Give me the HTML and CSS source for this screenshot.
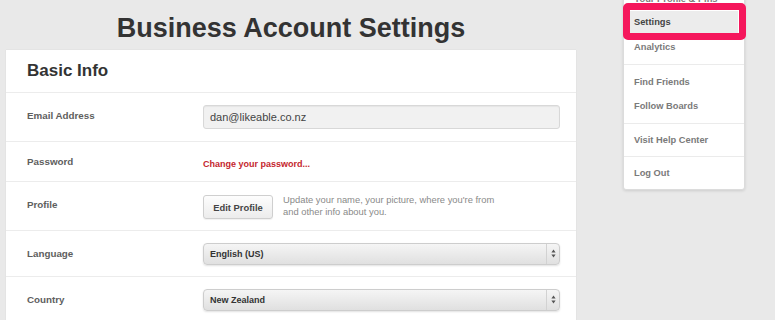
FILE: index.html
```html
<!DOCTYPE html>
<html lang="en">
<head>
    <meta charset="UTF-8">
    <title>Business Account Settings</title>
    <link rel="stylesheet" href="styles.css">
</head>
<body>
<div class="page">
    <!----------------------
    Main settings column
    ------------------------>
    <div class="main">
        <h1 class="page-title">Business Account Settings</h1>
        <div class="card">
            <div class="card-header">Basic Info</div>

            <div class="row row-tall">
                <div class="label">Email Address</div>
                <div class="field">
                    <div class="text-input">dan@likeable.co.nz</div>
                </div>
            </div>

            <div class="row row-short">
                <div class="label">Password</div>
                <div class="field">
                    <a class="link" href="#">Change your password...</a>
                </div>
            </div>

            <div class="row row-tall">
                <div class="label">Profile</div>
                <div class="field field-profile">
                    <button class="btn">Edit Profile</button>
                    <p class="help">Update your name, your picture, where you're from<br>and other info about you.</p>
                </div>
            </div>

            <div class="row row-mid">
                <div class="label">Language</div>
                <div class="field">
                    <div class="select">
                        <span class="select-value">English (US)</span>
                        <span class="select-arrows">
                            <svg width="5" height="9" viewBox="0 0 5 9"><path d="M2.5 0.5 L4.6 3.4 H0.4 Z M2.5 8.5 L4.6 5.6 H0.4 Z" fill="#555"/></svg>
                        </span>
                    </div>
                </div>
            </div>

            <div class="row row-mid">
                <div class="label">Country</div>
                <div class="field">
                    <div class="select">
                        <span class="select-value">New Zealand</span>
                        <span class="select-arrows">
                            <svg width="5" height="9" viewBox="0 0 5 9"><path d="M2.5 0.5 L4.6 3.4 H0.4 Z M2.5 8.5 L4.6 5.6 H0.4 Z" fill="#555"/></svg>
                        </span>
                    </div>
                </div>
            </div>
        </div>
    </div>

    <!----------------------
    Account dropdown menu
    ------------------------>
    <div class="sidebar">
        <div class="menu">
            <div class="menu-group menu-group-first">
                <a class="menu-item" href="#">Your Profile &amp; Pins</a>
                <a class="menu-item menu-item-active" href="#">Settings</a>
                <a class="menu-item" href="#">Analytics</a>
            </div>
            <div class="menu-group">
                <a class="menu-item" href="#">Find Friends</a>
                <a class="menu-item" href="#">Follow Boards</a>
            </div>
            <div class="menu-group">
                <a class="menu-item" href="#">Visit Help Center</a>
            </div>
            <div class="menu-group">
                <a class="menu-item" href="#">Log Out</a>
            </div>
        </div>
    </div>
</div>
</body>
</html>
```

FILE: styles.css
```css
/* --------------------
 Settings page styles
 -------------------- */

:root {
    --page-bg: #e9e9e9;
    --card-bg: #fff;
    --line: #ececec;
    --text-dark: #333;
    --text-label: #5e5e5e;
    --text-muted: #8a8a8a;
    --link-red: #c4262e;
    --highlight: #f5175c;
}

* {
    box-sizing: border-box;
    font-family: "Liberation Sans", Arial, Helvetica, sans-serif;
}

body {
    margin: 0;
    background-color: var(--page-bg);
    overflow: hidden;
}

.page {
    display: flex;
    align-items: flex-start;
    padding-left: 6px;
}

.main {
    width: 570px;
}

.page-title {
    margin: 0;
    height: 50px;
    line-height: 56px;
    font-size: 27px;
    font-weight: bold;
    text-align: center;
    color: var(--text-dark);
}

.card {
    background-color: var(--card-bg);
    height: 280px;
    box-shadow: 0 0 1px rgba(0, 0, 0, 0.12);
}

.card-header {
    height: 42px;
    line-height: 42px;
    padding-left: 21px;
    font-size: 17px;
    font-weight: bold;
    color: var(--text-dark);
}

.row {
    display: flex;
    align-items: center;
    border-top: 1px solid var(--line);
    padding: 0 16px 0 21px;
}

.row-tall {
    height: 49px;
}

.row-short {
    height: 40px;
}

.row-mid {
    height: 46px;
}

.label {
    width: 176px;
    font-size: 9.8px;
    font-weight: bold;
    color: var(--text-label);
}

.row-tall .label {
    margin-top: -4px;
}

.field {
    flex: 1;
}

.text-input {
    height: 24px;
    line-height: 22px;
    padding-left: 6px;
    font-size: 11px;
    color: #444;
    background-color: #f1f1f1;
    border: 1px solid #d8d8d8;
    border-radius: 3px;
    box-shadow: inset 0 1px 1px rgba(0, 0, 0, 0.05);
}

.link {
    font-size: 9px;
    font-weight: bold;
    color: var(--link-red);
    text-decoration: none;
}

.field-profile {
    display: flex;
    align-items: center;
    gap: 10px;
    margin-top: 2px;
}

.btn {
    width: 70px;
    height: 24px;
    padding: 0;
    font-size: 9.4px;
    font-weight: bold;
    color: #444;
    background: linear-gradient(#fdfdfd, #ececec);
    border: 1px solid #cfcfcf;
    border-radius: 3px;
    box-shadow: 0 1px 1px rgba(0, 0, 0, 0.06);
}

.help {
    margin: 0;
    font-size: 9.4px;
    line-height: 12px;
    color: var(--text-muted);
    margin-top: -2px;
}

.select {
    display: flex;
    align-items: center;
    height: 22px;
    background: linear-gradient(#f5f5f5, #e0e0e0);
    border: 1px solid #cdcdcd;
    border-radius: 4px;
    box-shadow: 0 1px 2px rgba(0, 0, 0, 0.12);
}

.select-value {
    flex: 1;
    padding-left: 6px;
    font-size: 9px;
    font-weight: bold;
    color: #333;
}

.select-arrows {
    display: flex;
    align-items: center;
    justify-content: center;
    width: 13px;
    height: 100%;
    border-left: 1px solid #d2d2d2;
}

/* --------------------
 Dropdown menu
 -------------------- */

.sidebar {
    margin-left: 47px;
    width: 122px;
}

.menu {
    margin-top: -18px;
    background-color: #fff;
    border: 1px solid #dcdcdc;
    border-radius: 3px;
    box-shadow: 0 1px 3px rgba(0, 0, 0, 0.12);
}

.menu-group {
    padding: 4px 0;
    border-top: 1px solid #ebebeb;
}

.menu-group:nth-child(2) {
    padding: 5px 0;
}

.menu-group-first {
    border-top: none;
    padding-bottom: 5px;
}

.menu-item {
    display: block;
    height: 24px;
    line-height: 24px;
    margin: 0 6px;
    padding: 0 4px;
    font-size: 9.3px;
    font-weight: bold;
    color: #7a7a7a;
    text-decoration: none;
    white-space: nowrap;
}

.menu-item-active {
    position: relative;
    height: 22px;
    line-height: 22px;
    margin-bottom: 2px;
    color: #444;
    background-color: #ececec;
}

/* pink annotation box over the active item */
.menu-item-active::after {
    content: "";
    position: absolute;
    top: -8px;
    bottom: -7px;
    left: -7px;
    right: -8px;
    border: 7px solid var(--highlight);
    border-radius: 5px;
}
```
